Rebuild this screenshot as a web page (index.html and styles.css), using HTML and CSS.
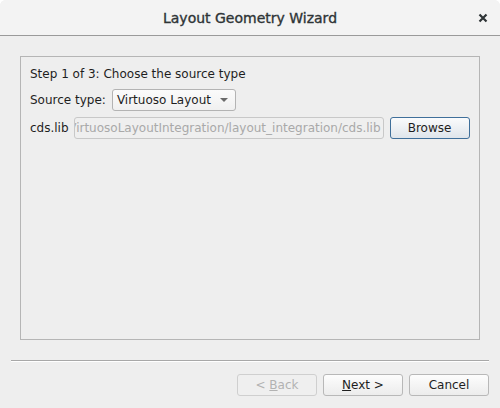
FILE: index.html
```html
<!DOCTYPE html>
<html>
<head>
<meta charset="utf-8">
<link rel="stylesheet" href="styles.css">
</head>
<body>
<div class="window">
  <div class="titlebar">
    <span class="title">Layout Geometry Wizard</span>
    <span class="close">
      <svg width="10" height="10" viewBox="0 0 10 10"><path d="M1.5 1.5 L8.5 8.5 M8.5 1.5 L1.5 8.5" stroke="#2e3436" stroke-width="2.2" stroke-linecap="butt"/></svg>
    </span>
  </div>
  <div class="content">
    <div class="group">
      <div class="step">Step 1 of 3: Choose the source type</div>
      <div class="row row-source">
        <span class="label">Source type:</span>
        <div class="combo">
          <span>Virtuoso Layout</span>
          <span class="arrow"></span>
        </div>
      </div>
      <div class="row row-lib">
        <span class="label">cds.lib</span>
        <div class="lineedit"><span class="ltext">VirtuosoLayoutIntegration/layout_integration/cds.lib</span></div>
        <div class="btn browse">Browse</div>
      </div>
    </div>
    <div class="separator"></div>
    <div class="buttons">
      <div class="btn disabled"><span>&lt; <u>B</u>ack</span></div>
      <div class="btn"><span><u>N</u>ext &gt;</span></div>
      <div class="btn"><span>Cancel</span></div>
    </div>
  </div>
</div>
</body>
</html>
```
FILE: styles.css
```css
html, body {
  margin: 0;
  padding: 0;
  background: #ffffff;
}
body {
  width: 500px;
  height: 408px;
  overflow: hidden;
  font-family: "DejaVu Sans", sans-serif;
  font-size: 12px;
  color: #1e1e1e;
}
.window {
  width: 500px;
  height: 408px;
  background: #eeeeee;
  border-radius: 6px 6px 0 0;
  overflow: hidden;
  display: flex;
  flex-direction: column;
}
.titlebar {
  height: 35px;
  background: #f3f3f3;
  border-bottom: 1px solid #9a9a9a;
  position: relative;
  display: flex;
  align-items: center;
  justify-content: center;
  flex-shrink: 0;
}
.title {
  font-size: 14px;
  color: #2e3436;
  -webkit-text-stroke: 0.35px #2e3436;
  padding-top: 1px;
}
.close {
  position: absolute;
  right: 12px;
  top: 13px;
  width: 10px;
  height: 10px;
  display: flex;
}
.content {
  flex: 1;
  display: flex;
  flex-direction: column;
  padding: 20px 11px 0 11px;
}
.group {
  box-sizing: border-box;
  margin: 0 9px;
  height: 284px;
  border: 1px solid #b5b5b5;
  padding: 9px 9px 0 9px;
  display: flex;
  flex-direction: column;
}
.step {
  height: 16px;
  line-height: 16px;
}
.row {
  display: flex;
  align-items: center;
}
.row-source {
  margin-top: 7px;
  height: 22px;
}
.row-lib {
  margin-top: 6px;
  height: 22px;
}
.label {
  margin-right: 6px;
}
.combo {
  width: 118px;
  height: 20px;
  border: 1px solid #b3b3b3;
  border-radius: 3px;
  background: linear-gradient(#fbfbfb, #f0f0f0);
  display: flex;
  align-items: center;
  padding-left: 4px;
}
.combo span:first-child {
  flex: 1;
}
.arrow {
  width: 0;
  height: 0;
  border-left: 4px solid transparent;
  border-right: 4px solid transparent;
  border-top: 4px solid #6a6a6a;
  margin-right: 7px;
}
.lineedit {
  width: 306px;
  height: 20px;
  border: 1px solid #c8c8c8;
  border-radius: 3px;
  background: #efefef;
  overflow: hidden;
  display: flex;
  justify-content: flex-end;
  align-items: center;
  padding-right: 2px;
  margin-left: -1px;
}
.ltext {
  white-space: nowrap;
  color: #a9a9a9;
  flex-shrink: 0;
}
.btn {
  width: 78px;
  height: 20px;
  border: 1px solid #b8b8b8;
  border-radius: 3px;
  background: linear-gradient(#fdfdfd, #ececec);
  display: flex;
  align-items: center;
  justify-content: center;
  color: #1e1e1e;
}
.btn span {
  white-space: pre;
}
.browse {
  margin-left: 6px;
  border-color: #3f6f9a;
  background: linear-gradient(#fafbfc, #dfe5eb);
}
.btn.disabled {
  color: #b2b2b2;
  border-color: #cfcfcf;
  background: #efefef;
}
.separator {
  margin-top: 20px;
  height: 1px;
  background: #a8a8a8;
  border-bottom: 1px solid #ffffff;
}
.buttons {
  display: flex;
  justify-content: flex-end;
  gap: 6px;
  margin-top: 12px;
}
```
